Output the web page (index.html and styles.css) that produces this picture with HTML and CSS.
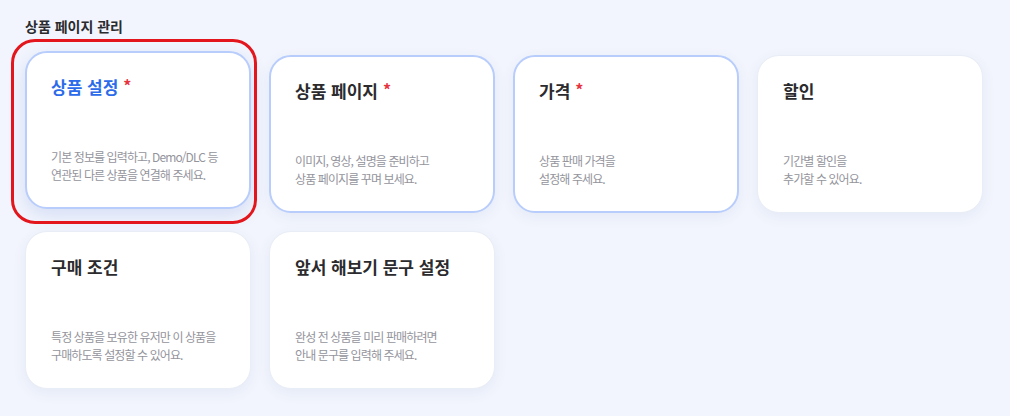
FILE: index.html
```html
<!DOCTYPE html>
<html lang="ko">
<head>
    <meta charset="UTF-8">
    <meta name="viewport" content="width=device-width, initial-scale=1.0">
    <title>상품 페이지 관리</title>
    <link rel="stylesheet" href="styles.css">
</head>
<body>

    <!-- Product page menu -->
    <div class="section">
        <h2 class="section-title">상품 페이지 관리</h2>

        <div class="cards">
            <div class="card required active">
                <span class="focus-ring"></span>
                <div class="card-title">상품 설정<span class="star">*</span></div>
                <p class="card-desc">기본 정보를 입력하고, Demo/DLC 등<br>연관된 다른 상품을 연결해 주세요.</p>
            </div>
            <div class="card required">
                <div class="card-title">상품 페이지<span class="star">*</span></div>
                <p class="card-desc">이미지, 영상, 설명을 준비하고<br>상품 페이지를 꾸며 보세요.</p>
            </div>
            <div class="card required">
                <div class="card-title">가격<span class="star">*</span></div>
                <p class="card-desc">상품 판매 가격을<br>설정해 주세요.</p>
            </div>
            <div class="card">
                <div class="card-title">할인</div>
                <p class="card-desc">기간별 할인을<br>추가할 수 있어요.</p>
            </div>
            <div class="card">
                <div class="card-title">구매 조건</div>
                <p class="card-desc">특정 상품을 보유한 유저만 이 상품을<br>구매하도록 설정할 수 있어요.</p>
            </div>
            <div class="card">
                <div class="card-title">앞서 해보기 문구 설정</div>
                <p class="card-desc">완성 전 상품을 미리 판매하려면<br>안내 문구를 입력해 주세요.</p>
            </div>
        </div>
    </div>

</body>
</html>
```

FILE: styles.css
```css
body {
    margin: 0;
    background-color: #f2f5fd;
    color: #2b2b2e;
    font-family: "Noto Sans CJK KR", "Noto Sans", sans-serif;
}
.section {
    padding: 16px 25px;
}
.section-title {
    margin: 0;
    font-size: 14px;
    line-height: 20px;
    font-weight: 700;
    color: #2b2b2e;
}
.cards {
    display: grid;
    grid-template-columns: repeat(4, 226px);
    grid-auto-rows: 158px;
    gap: 18px;
    margin-top: 19px;
}
.card {
    position: relative;
    display: flex;
    flex-direction: column;
    justify-content: space-between;
    box-sizing: border-box;
    padding: 23px 25px 24px;
    background: white;
    border: 1px solid #e9edf6;
    border-radius: 22px;
    box-shadow: 0px 4px 14px rgba(60, 90, 160, 0.07);
}
.card.required {
    border: 2px solid #b8cdfb;
    padding: 22px 24px 23px;
}
.card.active {
    transform: translateY(-4px);
    box-shadow: 0px 6px 18px rgba(60, 100, 200, 0.16);
}
.card.active .card-title {
    color: #2c6be9;
}
.card-title {
    font-size: 17px;
    line-height: 24px;
    font-weight: 700;
}
.star {
    display: inline-block;
    vertical-align: top;
    margin-left: 5px;
    padding-top: 3px;
    font-size: 16px;
    line-height: 15px;
    color: #e8343f;
}
.card-desc {
    margin: 0;
    font-size: 12px;
    line-height: 18px;
    letter-spacing: -0.9px;
    color: #94949c;
}
.focus-ring {
    position: absolute;
    top: -14px;
    left: -16px;
    right: -8px;
    bottom: -17px;
    border: 3px solid #e3161e;
    border-radius: 24px;
    pointer-events: none;
}
```
